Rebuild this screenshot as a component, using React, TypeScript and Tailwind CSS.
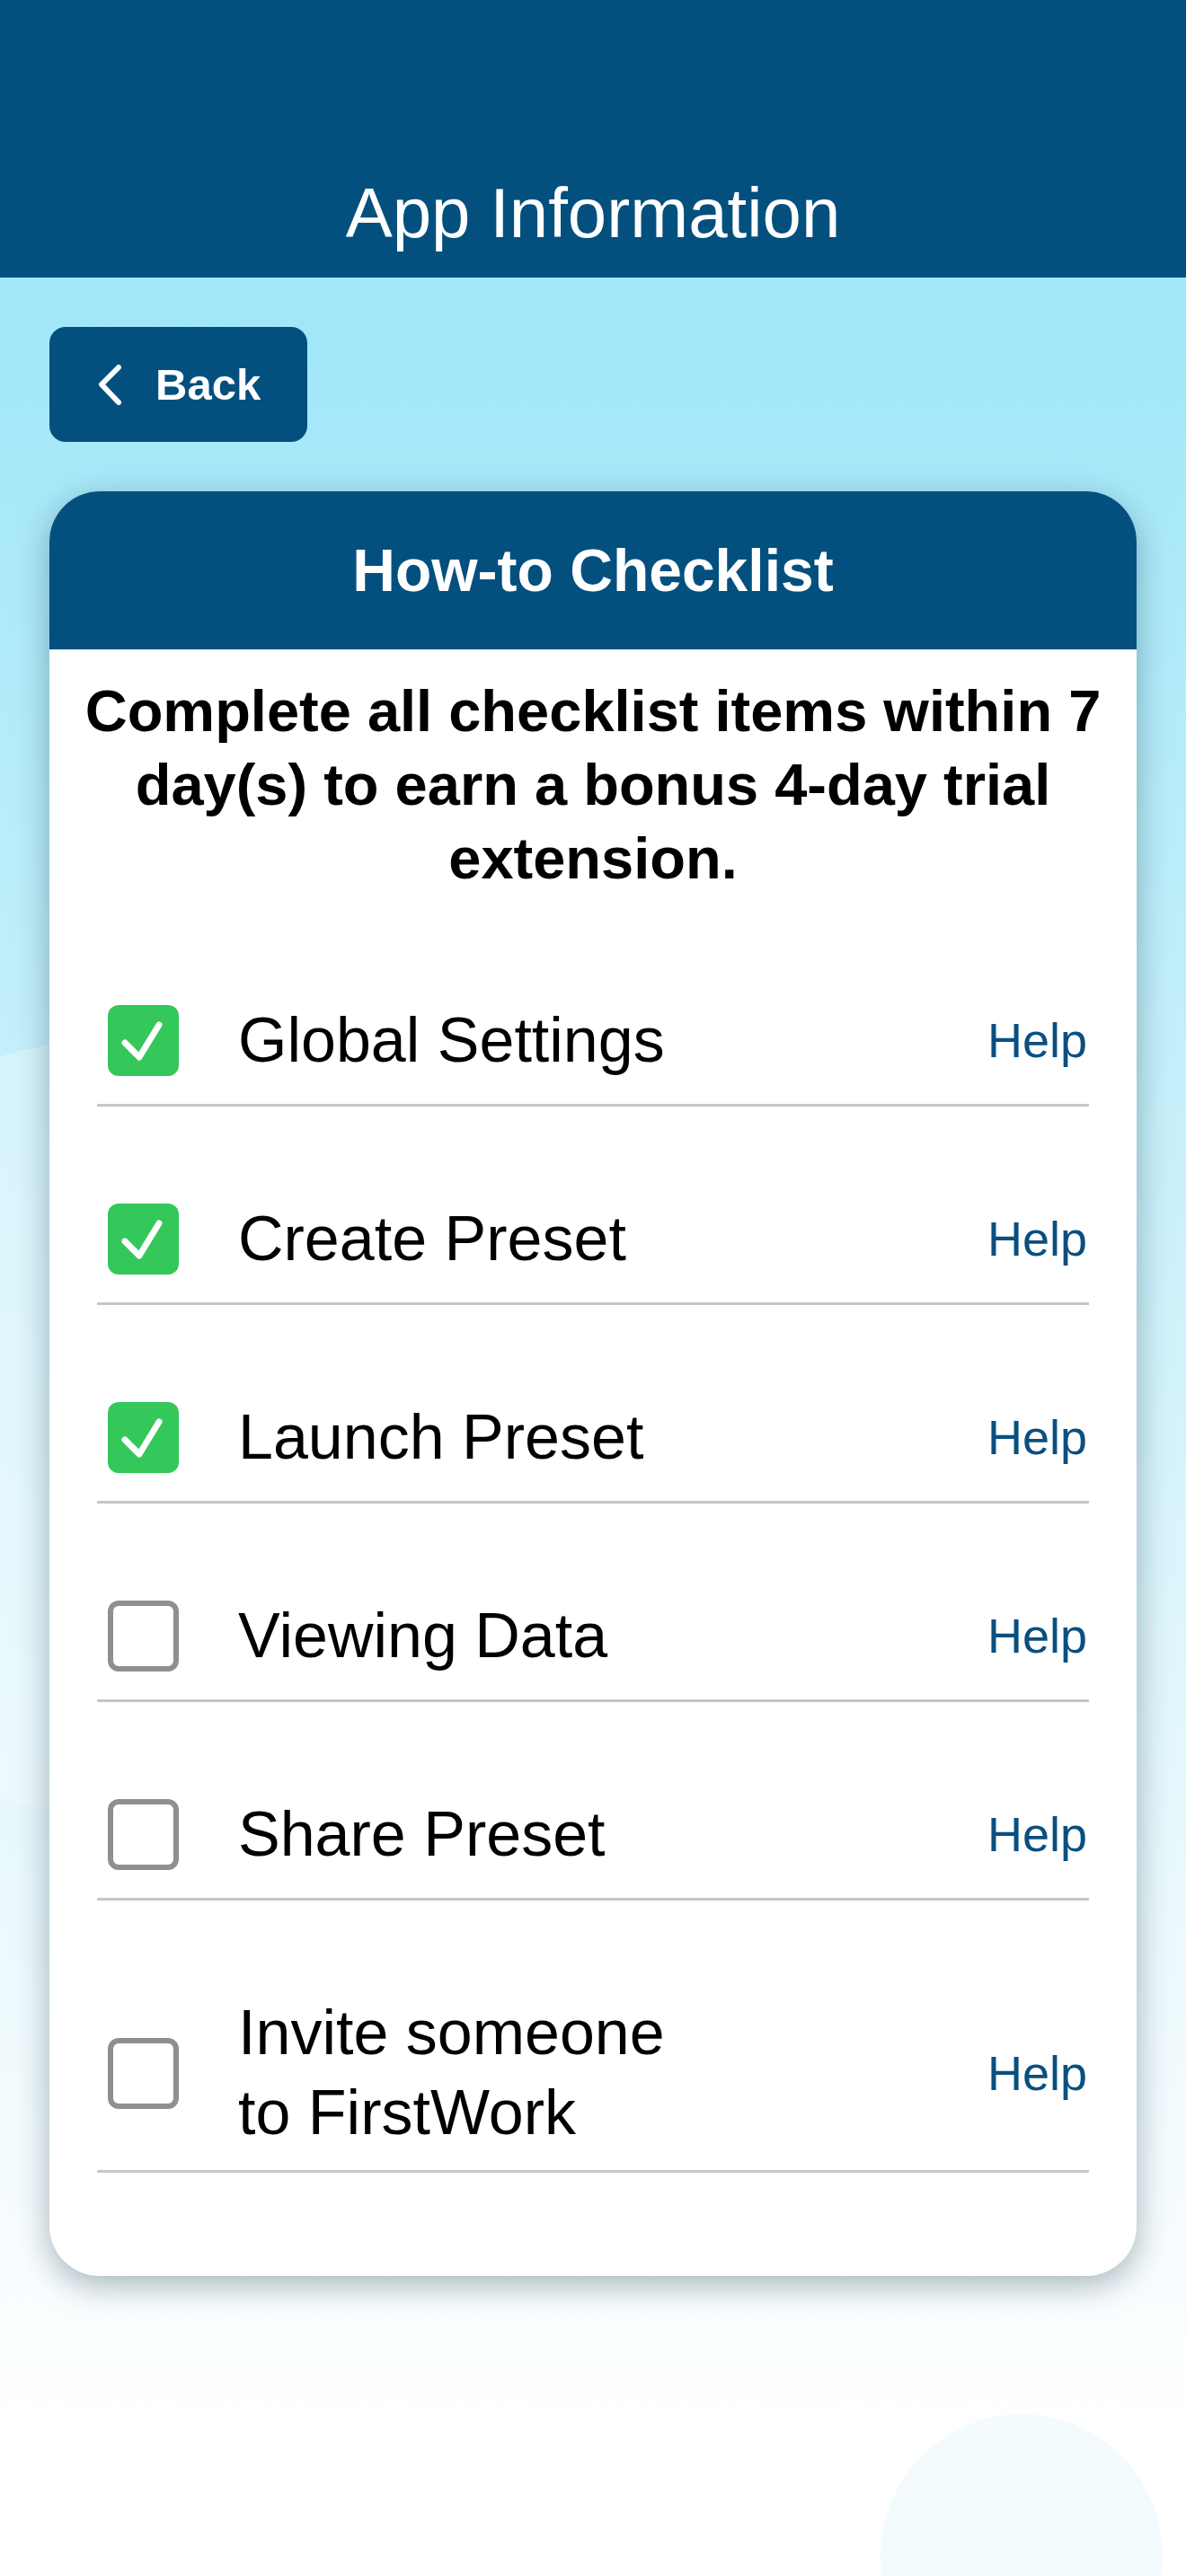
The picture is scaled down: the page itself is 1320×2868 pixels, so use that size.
import React from "react";

const FONT = { fontFamily: '"Liberation Sans", Arial, sans-serif' };

interface ChecklistItem {
  label: string[];
  done: boolean;
}

const items: ChecklistItem[] = [
  { label: ["Global Settings"], done: true },
  { label: ["Create Preset"], done: true },
  { label: ["Launch Preset"], done: true },
  { label: ["Viewing Data"], done: false },
  { label: ["Share Preset"], done: false },
  { label: ["Invite someone", "to FirstWork"], done: false },
];

function CheckBox({ done }: { done: boolean }) {
  if (!done) {
    return (
      <div className="h-[79px] w-[79px] shrink-0 rounded-[12px] border-[6px] border-[#8e8e93] bg-white" />
    );
  }
  return (
    <div className="flex h-[79px] w-[79px] shrink-0 items-center justify-center rounded-[12px] bg-[#34c759]">
      <svg width="79" height="79" viewBox="0 0 79 79" fill="none">
        <path
          d="M19 42 L35 58 L57 22"
          stroke="white"
          strokeWidth="7"
          strokeLinecap="round"
          strokeLinejoin="round"
        />
      </svg>
    </div>
  );
}

function ChecklistRow({ item }: { item: ChecklistItem }) {
  const multi = item.label.length > 1;
  return (
    <div
      className={
        multi
          ? "flex items-center border-b-[3px] border-[#c6c6c8] pb-[19px] pl-[12px] pr-[2px] pt-[103px]"
          : "flex items-center border-b-[3px] border-[#c6c6c8] pb-[26px] pl-[12px] pr-[2px] pt-[103px]"
      }
    >
      <CheckBox done={item.done} />
      <div className="ml-[66px] flex-1 text-[70px] leading-[89px] text-black">
        {item.label.map((line) => (
          <div key={line}>{line}</div>
        ))}
      </div>
      <span className="text-[54px] leading-[89px] text-[#0b4f80]">Help</span>
    </div>
  );
}

export default function App() {
  return (
    <div
      style={FONT}
      className="relative min-h-[2868px] w-[1320px] overflow-hidden bg-[linear-gradient(to_bottom,#a0e7f9_12%,#c3effa_40%,#ecf9fd_75%,#ffffff_95%)]"
    >
      {/* soft background blobs */}
      <div className="absolute left-[-307px] top-[1158px] h-[862px] w-[862px] rounded-full bg-white/30" />
      <div className="absolute left-[980px] top-[2688px] h-[314px] w-[314px] rounded-full bg-[#f3fbfe]" />

      <div className="relative">
        <header className="h-[309px] bg-[#03507f] pt-[198px] text-center text-[78px] leading-[78px] text-white">
          App Information
        </header>

        <button className="ml-[55px] mt-[55px] flex h-[128px] w-[287px] items-center rounded-[18px] bg-[#03507f] pl-[51px] text-white">
          <svg width="31" height="48" viewBox="0 0 31 48" fill="none">
            <path
              d="M26 5 L7 24 L26 44"
              stroke="white"
              strokeWidth="6"
              strokeLinecap="round"
              strokeLinejoin="round"
            />
          </svg>
          <span className="ml-[36px] text-[49px] font-bold leading-[48px]">Back</span>
        </button>

        <section className="mx-[55px] mt-[55px] overflow-hidden rounded-[56px] bg-white pb-[115px] shadow-[0_10px_36px_rgba(0,40,60,0.34)]">
          <div className="flex h-[176px] items-center justify-center bg-[#03507f] text-[66px] font-bold text-white">
            How-to Checklist
          </div>
          <p className="px-[30px] pt-[28px] text-center text-[65px] font-bold leading-[82px] text-black">
            Complete all checklist items within 7 day(s) to earn a bonus 4-day trial extension.
          </p>
          <div className="mt-[14px] px-[53px]">
            {items.map((item) => (
              <ChecklistRow key={item.label.join(" ")} item={item} />
            ))}
          </div>
        </section>
      </div>
    </div>
  );
}
